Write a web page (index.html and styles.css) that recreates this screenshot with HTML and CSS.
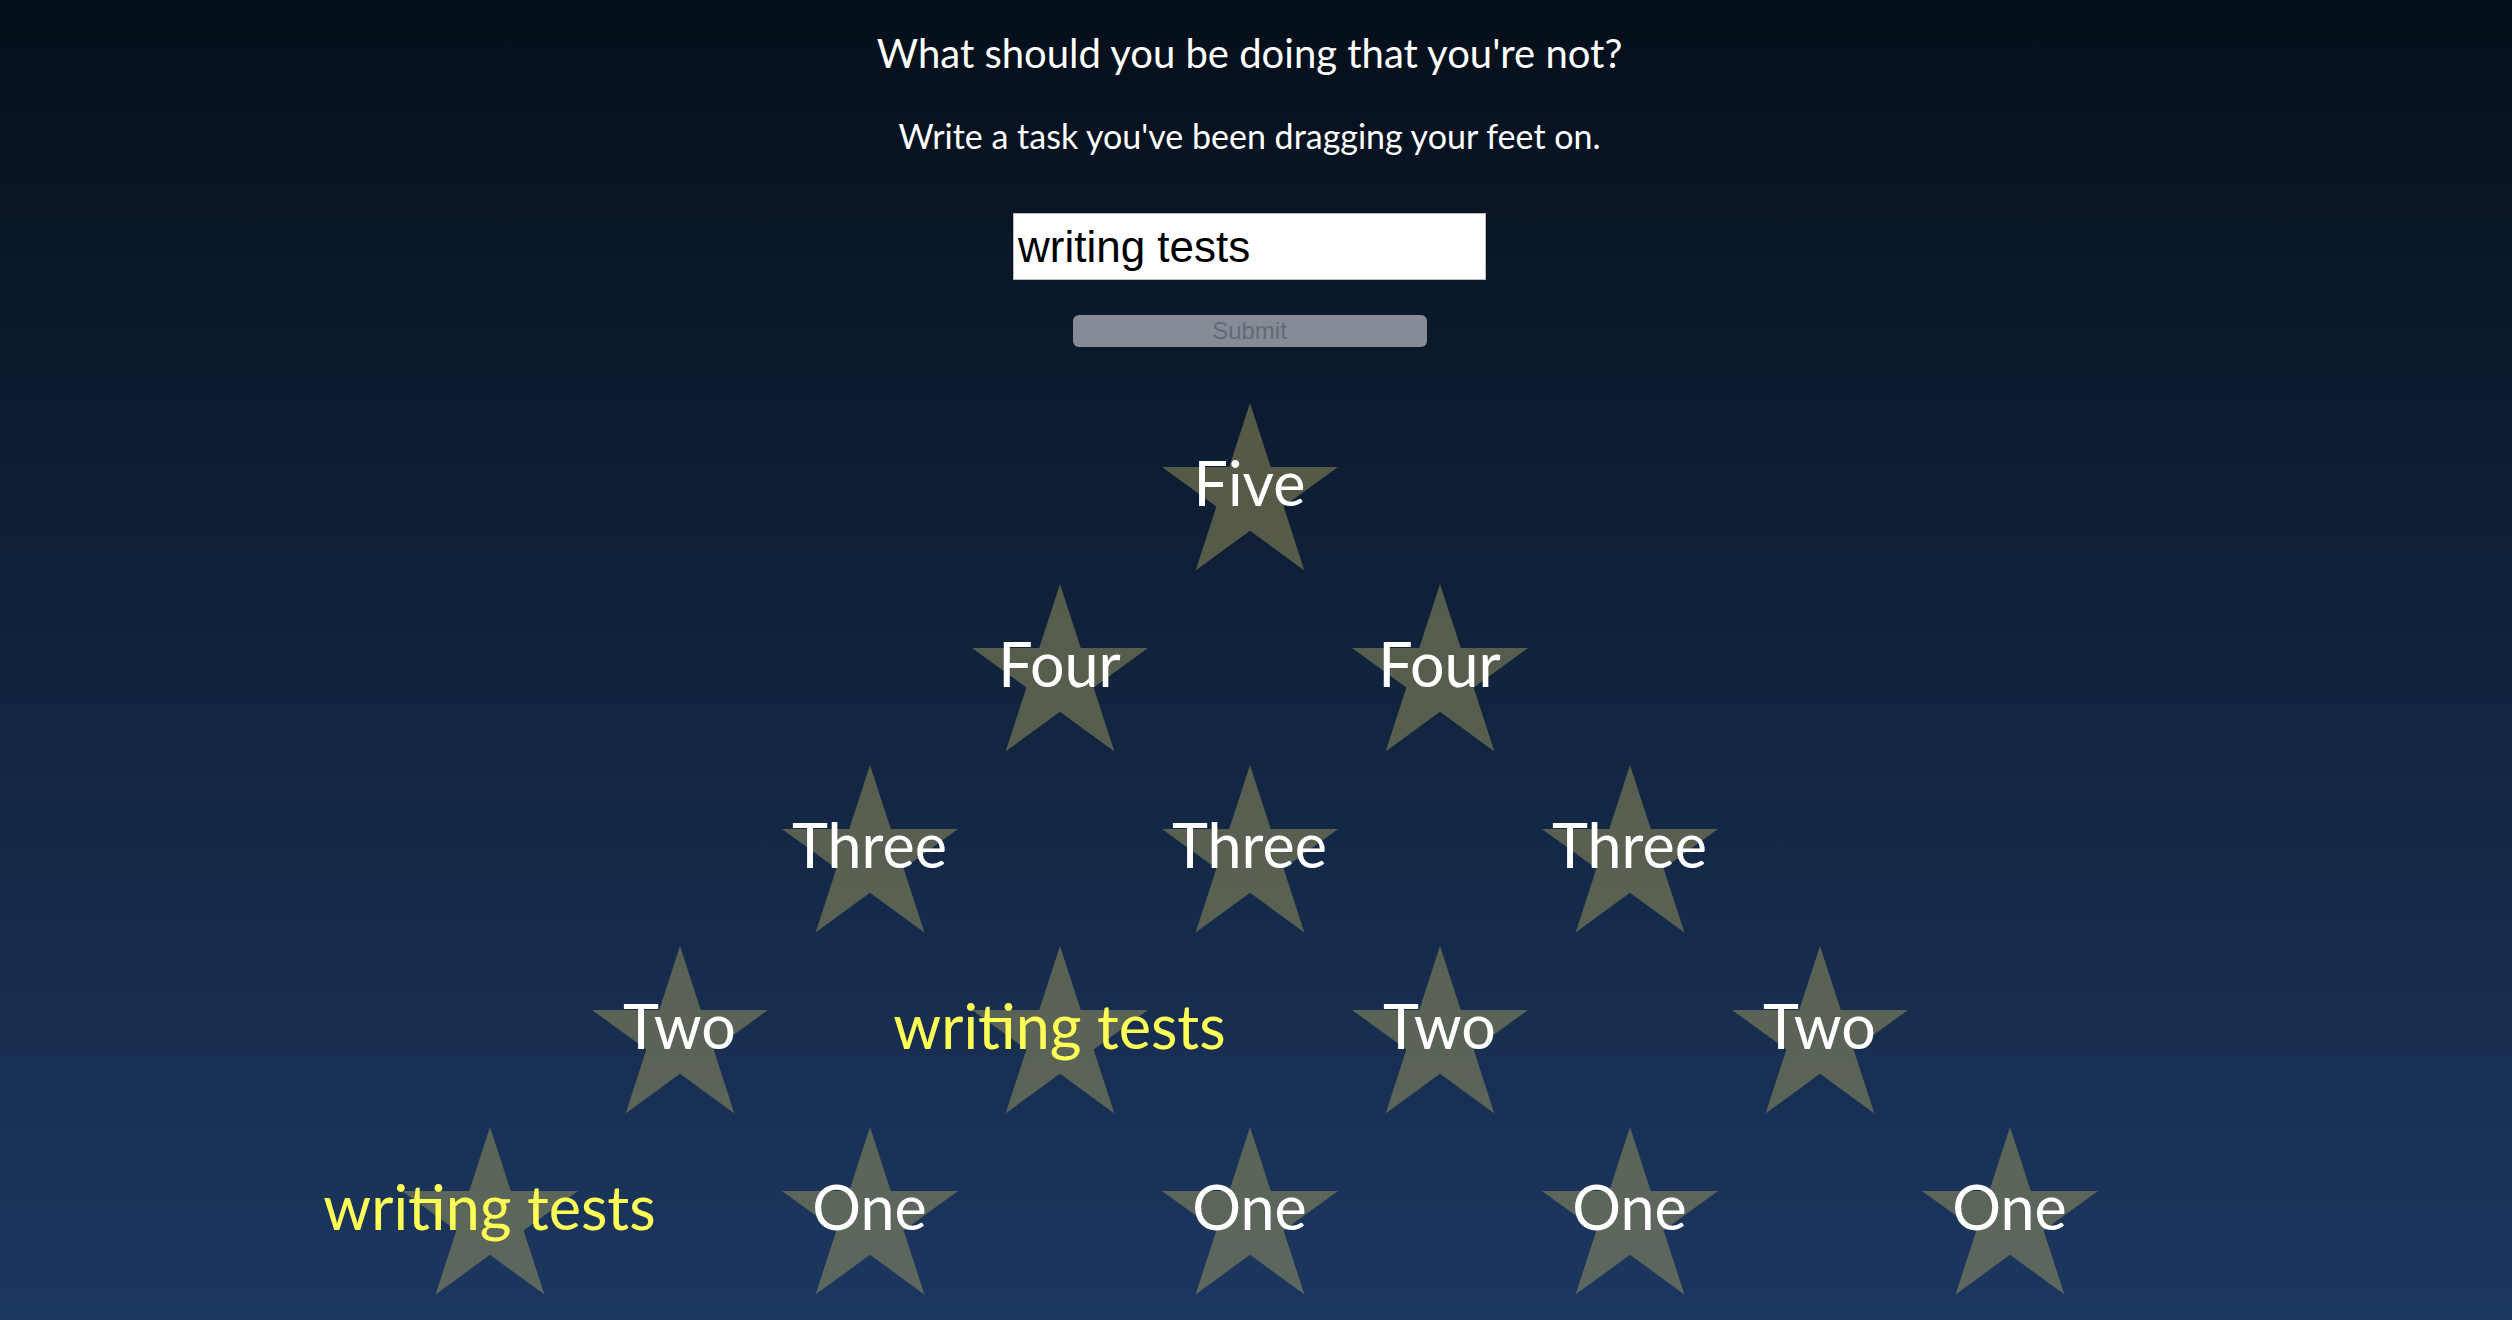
FILE: index.html
```html
<!DOCTYPE html>
<html lang="en">
<head>
<meta charset="utf-8">
<title>Star pyramid</title>
<link rel="stylesheet" href="styles.css">
</head>
<body>
<main class="app">
  <header class="intro">
    <h1 class="title">What should you be doing that you're not?</h1>
    <p class="subtitle">Write a task you've been dragging your feet on.</p>
    <form class="task-form">
      <input class="task-input" type="text" value="writing tests">
      <button class="submit-btn" type="button" disabled>Submit</button>
    </form>
  </header>

  <section class="pyramid">
    <div class="row">
      <div class="cell"><svg class="star" viewBox="0 0 176 168"><polygon points="88,0 108.77,63.94 176,63.94 121.61,103.45 142.39,167.39 88,127.87 33.61,167.39 54.39,103.45 0,63.94 67.23,63.94"/></svg><span class="label">Five</span></div>
    </div>
    <div class="row">
      <div class="cell"><svg class="star" viewBox="0 0 176 168"><polygon points="88,0 108.77,63.94 176,63.94 121.61,103.45 142.39,167.39 88,127.87 33.61,167.39 54.39,103.45 0,63.94 67.23,63.94"/></svg><span class="label">Four</span></div>
      <div class="cell"><svg class="star" viewBox="0 0 176 168"><polygon points="88,0 108.77,63.94 176,63.94 121.61,103.45 142.39,167.39 88,127.87 33.61,167.39 54.39,103.45 0,63.94 67.23,63.94"/></svg><span class="label">Four</span></div>
    </div>
    <div class="row">
      <div class="cell"><svg class="star" viewBox="0 0 176 168"><polygon points="88,0 108.77,63.94 176,63.94 121.61,103.45 142.39,167.39 88,127.87 33.61,167.39 54.39,103.45 0,63.94 67.23,63.94"/></svg><span class="label">Three</span></div>
      <div class="cell"><svg class="star" viewBox="0 0 176 168"><polygon points="88,0 108.77,63.94 176,63.94 121.61,103.45 142.39,167.39 88,127.87 33.61,167.39 54.39,103.45 0,63.94 67.23,63.94"/></svg><span class="label">Three</span></div>
      <div class="cell"><svg class="star" viewBox="0 0 176 168"><polygon points="88,0 108.77,63.94 176,63.94 121.61,103.45 142.39,167.39 88,127.87 33.61,167.39 54.39,103.45 0,63.94 67.23,63.94"/></svg><span class="label">Three</span></div>
    </div>
    <div class="row">
      <div class="cell"><svg class="star" viewBox="0 0 176 168"><polygon points="88,0 108.77,63.94 176,63.94 121.61,103.45 142.39,167.39 88,127.87 33.61,167.39 54.39,103.45 0,63.94 67.23,63.94"/></svg><span class="label">Two</span></div>
      <div class="cell"><svg class="star" viewBox="0 0 176 168"><polygon points="88,0 108.77,63.94 176,63.94 121.61,103.45 142.39,167.39 88,127.87 33.61,167.39 54.39,103.45 0,63.94 67.23,63.94"/></svg><span class="label label-task">writing tests</span></div>
      <div class="cell"><svg class="star" viewBox="0 0 176 168"><polygon points="88,0 108.77,63.94 176,63.94 121.61,103.45 142.39,167.39 88,127.87 33.61,167.39 54.39,103.45 0,63.94 67.23,63.94"/></svg><span class="label">Two</span></div>
      <div class="cell"><svg class="star" viewBox="0 0 176 168"><polygon points="88,0 108.77,63.94 176,63.94 121.61,103.45 142.39,167.39 88,127.87 33.61,167.39 54.39,103.45 0,63.94 67.23,63.94"/></svg><span class="label">Two</span></div>
    </div>
    <div class="row">
      <div class="cell"><svg class="star" viewBox="0 0 176 168"><polygon points="88,0 108.77,63.94 176,63.94 121.61,103.45 142.39,167.39 88,127.87 33.61,167.39 54.39,103.45 0,63.94 67.23,63.94"/></svg><span class="label label-task">writing tests</span></div>
      <div class="cell"><svg class="star" viewBox="0 0 176 168"><polygon points="88,0 108.77,63.94 176,63.94 121.61,103.45 142.39,167.39 88,127.87 33.61,167.39 54.39,103.45 0,63.94 67.23,63.94"/></svg><span class="label">One</span></div>
      <div class="cell"><svg class="star" viewBox="0 0 176 168"><polygon points="88,0 108.77,63.94 176,63.94 121.61,103.45 142.39,167.39 88,127.87 33.61,167.39 54.39,103.45 0,63.94 67.23,63.94"/></svg><span class="label">One</span></div>
      <div class="cell"><svg class="star" viewBox="0 0 176 168"><polygon points="88,0 108.77,63.94 176,63.94 121.61,103.45 142.39,167.39 88,127.87 33.61,167.39 54.39,103.45 0,63.94 67.23,63.94"/></svg><span class="label">One</span></div>
      <div class="cell"><svg class="star" viewBox="0 0 176 168"><polygon points="88,0 108.77,63.94 176,63.94 121.61,103.45 142.39,167.39 88,127.87 33.61,167.39 54.39,103.45 0,63.94 67.23,63.94"/></svg><span class="label">One</span></div>
    </div>
  </section>
</main>
</body>
</html>
```

FILE: styles.css
```css
html, body {
  height: 100%;
}

body {
  margin: 0;
  overflow: hidden;
  background: linear-gradient(to bottom, #050f1a 0%, #1c3760 100%);
  font-family: Lato, "Open Sans", sans-serif;
  color: #ffffff;
}

.app {
  margin-right: 13px;
  display: flex;
  flex-direction: column;
  align-items: center;
}

.intro {
  display: flex;
  flex-direction: column;
  align-items: center;
  padding-top: 29px;
}

.title {
  margin: 0;
  font-size: 40px;
  font-weight: 400;
  line-height: 48px;
}

.subtitle {
  margin: 39px 0 0;
  font-size: 34px;
  line-height: 40px;
}

.task-form {
  display: flex;
  flex-direction: column;
  align-items: center;
  margin-top: 57px;
}

.task-input {
  box-sizing: border-box;
  width: 473px;
  height: 67px;
  margin: 0;
  padding: 1px 4px;
  border: 1px solid #b9b9b9;
  background: #ffffff;
  color: #000000;
  font-family: "Liberation Sans", Arial, sans-serif;
  font-size: 44px;
}

.submit-btn {
  box-sizing: border-box;
  width: 354px;
  height: 32px;
  margin-top: 35px;
  padding: 0;
  border: none;
  border-radius: 6px;
  background: #868c95;
  color: #646a74;
  font-family: "Liberation Sans", Arial, sans-serif;
  font-size: 24px;
  line-height: 32px;
}

.pyramid {
  display: flex;
  flex-direction: column;
  align-items: center;
  margin-top: 56px;
}

.row {
  display: flex;
  justify-content: center;
  height: 181px;
}

.cell {
  width: 380px;
  display: grid;
  justify-items: center;
  align-items: start;
}

.cell > * {
  grid-area: 1 / 1;
}

.star {
  width: 176px;
  height: 168px;
  display: block;
}

.star polygon {
  fill: rgba(158, 152, 92, 0.5);
}

.label {
  margin-top: 43px;
  font-size: 61px;
  line-height: normal;
  white-space: nowrap;
  color: #ffffff;
}

.label-task {
  color: #ffff55;
}
```
